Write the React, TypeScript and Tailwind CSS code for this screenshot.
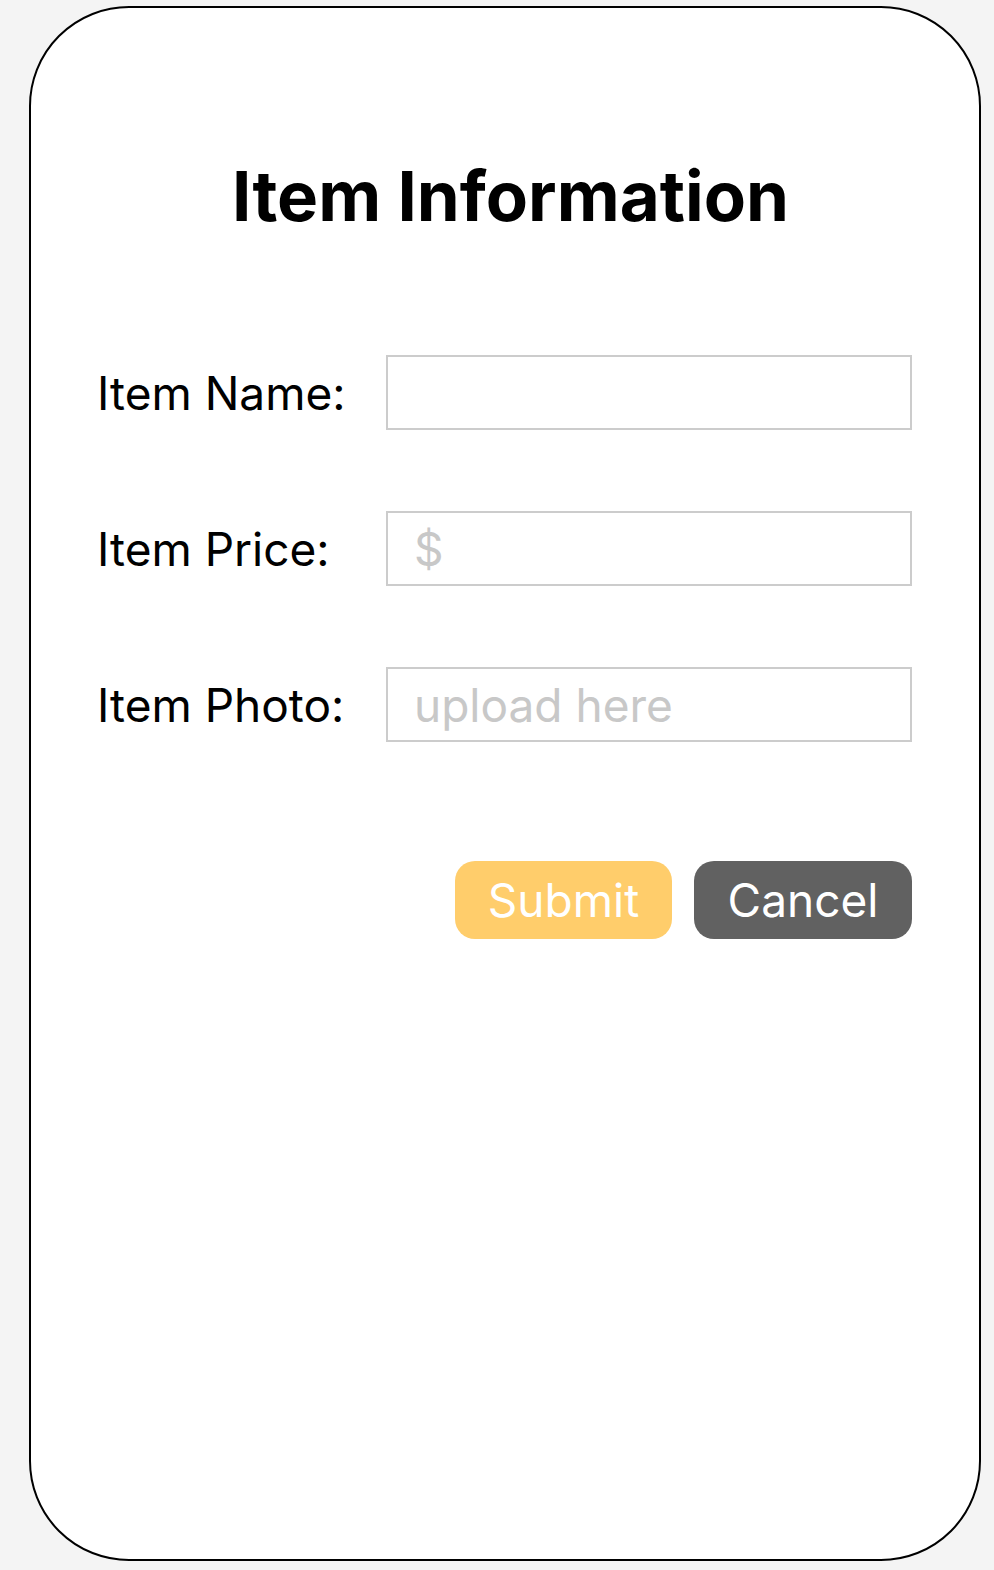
export default function App() {
  const rows = [
    { label: 'Item Name:', placeholder: '' },
    { label: 'Item Price:', placeholder: '$' },
    { label: 'Item Photo:', placeholder: 'upload here' },
  ]

  return (
    <div className="min-h-[1570px] bg-[#f4f4f4] pl-[29px] pt-[6px] font-['Inter',sans-serif]">
      <div className="flex h-[1555px] w-[952px] flex-col rounded-[100px] border-2 border-black bg-white pl-[66px] pr-[67px]">
        <h1 className="mt-[148px] pl-[12px] text-center text-[69px] leading-[80px] font-bold text-black">
          Item Information
        </h1>

        <div className="mt-[119px] flex flex-col gap-[81px]">
          {rows.map((row) => (
            <div key={row.label} className="flex items-center">
              <label className="w-[289px] shrink-0 text-[46px] leading-none text-black">{row.label}</label>
              <input
                type="text"
                placeholder={row.placeholder}
                className="h-[75px] w-[526px] shrink-0 border-2 border-[#cccccc] bg-white px-[26px] text-[46px] text-black outline-none placeholder:text-[#c8c8c8]"
              />
            </div>
          ))}
        </div>

        <div className="mt-[119px] flex justify-end gap-[22px]">
          <button className="h-[78px] w-[217px] rounded-[20px] bg-[#ffcd6b] text-[46px] text-white">
            Submit
          </button>
          <button className="h-[78px] w-[218px] rounded-[20px] bg-[#616161] text-[46px] text-white">
            Cancel
          </button>
        </div>
      </div>
    </div>
  )
}
